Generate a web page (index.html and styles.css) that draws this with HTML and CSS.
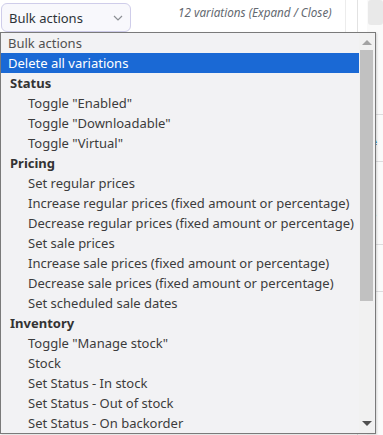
FILE: index.html
```html
<!DOCTYPE html>
<html lang="en">
<head>
    <meta charset="UTF-8">
    <meta name="viewport" content="width=device-width, initial-scale=1.0">
    <title>Variations - Bulk actions</title>
    <link rel="stylesheet" href="styles.css">
</head>
<body>

    <!-- Page behind the open dropdown -->
    <div class="page">
        <div class="main">
            <div class="toolbar">
                <div class="select-box">
                    <span>Bulk actions</span>
                    <svg class="chevron" width="10" height="6" viewBox="0 0 10 6">
                        <path d="M1 1 L5 5 L9 1" fill="none" stroke="#8c8f94" stroke-width="1.2"/>
                    </svg>
                </div>
                <div class="count">12 variations (Expand / Close)</div>
            </div>
        </div>
        <div class="side">
            <div class="side-top"></div>
            <div class="side-row first"></div>
            <div class="side-row link">A</div>
            <div class="side-row strong">P</div>
            <div class="side-row"></div>
        </div>
    </div>

    <!-- Open dropdown list -->
    <div class="dropdown">
        <ul class="options">
            <li class="opt plain muted">Bulk actions</li>
            <li class="opt plain selected">Delete all variations</li>
            <li class="group">Status</li>
            <li class="opt">Toggle "Enabled"</li>
            <li class="opt">Toggle "Downloadable"</li>
            <li class="opt">Toggle "Virtual"</li>
            <li class="group">Pricing</li>
            <li class="opt">Set regular prices</li>
            <li class="opt">Increase regular prices (fixed amount or percentage)</li>
            <li class="opt">Decrease regular prices (fixed amount or percentage)</li>
            <li class="opt">Set sale prices</li>
            <li class="opt">Increase sale prices (fixed amount or percentage)</li>
            <li class="opt">Decrease sale prices (fixed amount or percentage)</li>
            <li class="opt">Set scheduled sale dates</li>
            <li class="group">Inventory</li>
            <li class="opt">Toggle "Manage stock"</li>
            <li class="opt">Stock</li>
            <li class="opt">Set Status - In stock</li>
            <li class="opt">Set Status - Out of stock</li>
            <li class="opt">Set Status - On backorder</li>
        </ul>
        <div class="scrollbar">
            <div class="arrow up"></div>
            <div class="thumb"></div>
            <div class="arrow down"></div>
        </div>
    </div>

</body>
</html>
```

FILE: styles.css
```css
body {
    font-family: "Noto Sans", "Open Sans", sans-serif;
    background-color: #ffffff;
    margin: 0;
    padding: 0;
    color: #2c3338;
    overflow: hidden;
}
.page {
    display: flex;
    height: 435px;
}
.main {
    width: 366px;
    border-right: 1px solid #e2e2e2;
}
.toolbar {
    display: flex;
    align-items: flex-start;
    width: 345px;
    height: 33px;
    border-right: 1px solid #ececec;
}
.select-box {
    display: flex;
    align-items: center;
    justify-content: space-between;
    box-sizing: border-box;
    width: 130px;
    height: 29px;
    margin: 3px 0 0 1px;
    padding: 0 7px 0 7px;
    border: 1px solid #cfcdea;
    border-radius: 6px;
    background-color: #f8f8fc;
    font-size: 13px;
    color: #2c3338;
}
.chevron {
    margin-top: 1px;
}
.count {
    margin: 4px 0 0 47px;
    font-size: 11.7px;
    font-style: italic;
    color: #646970;
}
.side {
    width: 16px;
    margin-left: 9px;
    background-color: #fafafa;
}
.side-top {
    height: 25px;
    margin: 0 0 0 1px;
    background-color: #e9e9e9;
    border-radius: 3px;
}
.side-row {
    height: 46px;
    border-bottom: 1px solid #dcdcde;
    font-size: 13px;
    line-height: 46px;
    padding-left: 1px;
}
.side-row.first {
    height: 89px;
}
.side-row.link {
    color: #2271b1;
    text-decoration: underline;
}
.side-row.strong {
    height: 82px;
    line-height: 110px;
    color: #1d2327;
}

/* dropdown popup */
.dropdown {
    position: absolute;
    left: 0;
    top: 32px;
    width: 374px;
    height: 400px;
    display: flex;
    background-color: #f2f2f4;
    border: 1px solid #7a7a7a;
    box-shadow: 1px 1px 2px rgba(0, 0, 0, 0.15);
}
.options {
    list-style: none;
    margin: 0;
    padding: 0;
    flex: 1;
    font-size: 13px;
}
.options li {
    height: 20px;
    line-height: 20px;
    white-space: nowrap;
    overflow: hidden;
}
.opt {
    padding-left: 27px;
    color: #3c3c3c;
}
.opt.plain {
    padding-left: 7px;
}
.opt.muted {
    color: #505050;
}
.opt.selected {
    background-color: #1a69d5;
    color: #ffffff;
}
.group {
    padding-left: 9px;
    font-weight: bold;
    color: #333333;
}
.scrollbar {
    display: flex;
    flex-direction: column;
    align-items: center;
    width: 15px;
    margin-right: 1px;
    background-color: #f1f1f1;
}
.thumb {
    width: 13px;
    height: 251px;
    margin-top: 5px;
    background-color: #c1c1c1;
}
.arrow {
    width: 0;
    height: 0;
    border-left: 5px solid transparent;
    border-right: 5px solid transparent;
}
.arrow.up {
    margin-top: 7px;
    border-bottom: 5px solid #a3a3a3;
}
.arrow.down {
    margin-top: auto;
    margin-bottom: 7px;
    border-top: 5px solid #505050;
}
```
